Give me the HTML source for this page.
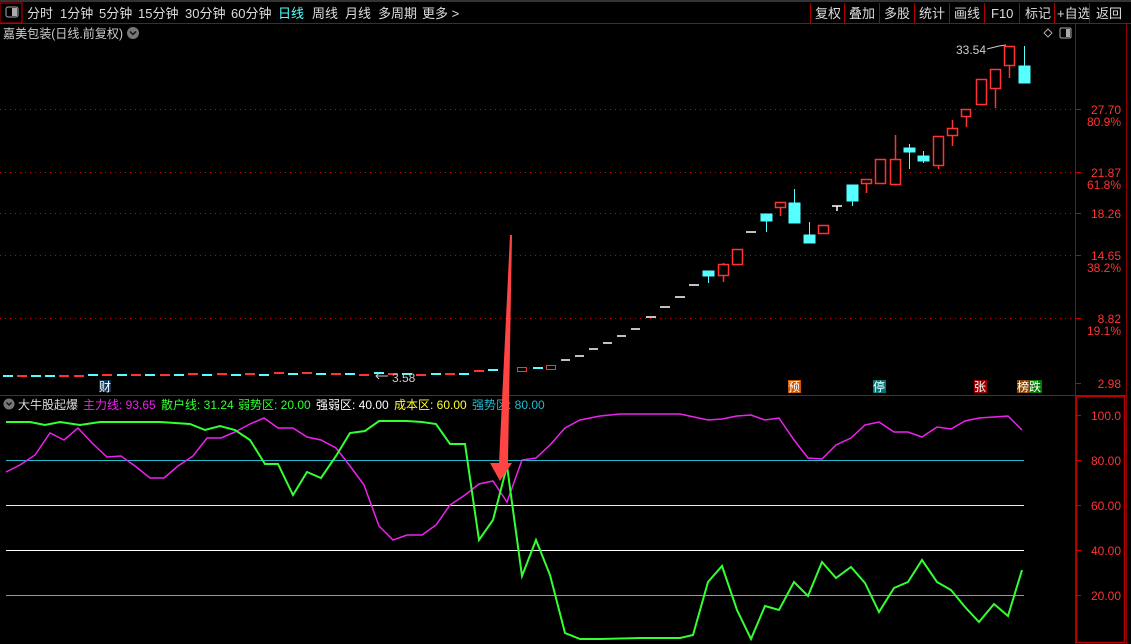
<!DOCTYPE html>
<html><head><meta charset="utf-8"><style>
html,body{margin:0;padding:0;background:#000;width:1131px;height:644px;overflow:hidden;font-family:"Liberation Sans","Noto Sans CJK SC",sans-serif}
</style></head><body>
<svg width="1131" height="644" style="position:absolute;left:0;top:0" font-family="Liberation Sans, Noto Sans CJK SC, sans-serif">
<rect x="0" y="0" width="1131" height="2" fill="#333"/>
<line x1="0" y1="23.5" x2="1131" y2="23.5" stroke="#a00" />
<rect x="0" y="3" width="22" height="20" fill="none" stroke="#c00"/>
<rect x="6" y="7" width="12" height="10" rx="2" fill="none" stroke="#aaa"/><rect x="12" y="8" width="5" height="8" fill="#aaa"/>
<g font-size="13" fill="#ddd">
<text x="27" y="18">分时</text><text x="60" y="18">1分钟</text><text x="99" y="18">5分钟</text><text x="138" y="18">15分钟</text><text x="185" y="18">30分钟</text><text x="231" y="18">60分钟</text>
<text x="278" y="18" fill="#5ff">日线</text><text x="312" y="18">周线</text><text x="345" y="18">月线</text><text x="378" y="18">多周期</text><text x="422" y="18">更多 &gt;</text>
<text x="815" y="18">复权</text><text x="849" y="18">叠加</text><text x="884" y="18">多股</text><text x="919" y="18">统计</text><text x="954" y="18">画线</text><text x="991" y="18">F10</text><text x="1025" y="18">标记</text><text x="1057" y="18">+自选</text><text x="1096" y="18">返回</text>
</g>
<g stroke="#a00"><line x1="810.5" y1="3" x2="810.5" y2="23"/><line x1="844.5" y1="3" x2="844.5" y2="23"/><line x1="879.5" y1="3" x2="879.5" y2="23"/><line x1="914.5" y1="3" x2="914.5" y2="23"/><line x1="949.5" y1="3" x2="949.5" y2="23"/><line x1="984.5" y1="3" x2="984.5" y2="23"/><line x1="1019.5" y1="3" x2="1019.5" y2="23"/><line x1="1054.5" y1="3" x2="1054.5" y2="23"/><line x1="1089.5" y1="3" x2="1089.5" y2="23"/></g>
<text x="3" y="38" font-size="12.5" fill="#ccc" textLength="120" lengthAdjust="spacingAndGlyphs">嘉美包装(日线.前复权)</text>
<circle cx="133" cy="33" r="6" fill="#777"/><path d="M130 31.5l3 3 3-3" stroke="#111" stroke-width="1.5" fill="none"/>
<path d="M1048 29l4 4-4 4-4-4z" fill="none" stroke="#aaa"/>
<rect x="1060" y="28" width="11" height="10" rx="1.5" fill="none" stroke="#aaa"/><rect x="1066" y="29" width="4" height="8" fill="#aaa"/>
<line x1="1075.5" y1="24" x2="1075.5" y2="644" stroke="#a00"/>
<line x1="1126.5" y1="24" x2="1126.5" y2="644" stroke="#800"/>
<line x1="0" y1="395.5" x2="1126" y2="395.5" stroke="#b00"/>
<rect x="1076.5" y="396.5" width="48" height="246" fill="none" stroke="#b00" stroke-width="1.5"/>
<g stroke="#c00" stroke-dasharray="1 4">
<line x1="0" y1="109.5" x2="1075" y2="109.5"/><line x1="0" y1="172.5" x2="1075" y2="172.5"/><line x1="0" y1="213.5" x2="1075" y2="213.5"/><line x1="0" y1="255.5" x2="1075" y2="255.5"/><line x1="0" y1="318.5" x2="1075" y2="318.5"/>
</g>
<g stroke="#c00"><line x1="1075" y1="109.5" x2="1081" y2="109.5"/><line x1="1075" y1="172.5" x2="1081" y2="172.5"/><line x1="1075" y1="213.5" x2="1081" y2="213.5"/><line x1="1075" y1="255.5" x2="1081" y2="255.5"/><line x1="1075" y1="318.5" x2="1081" y2="318.5"/><line x1="1075" y1="383.5" x2="1081" y2="383.5"/>
<line x1="1075" y1="415.5" x2="1081" y2="415.5"/><line x1="1075" y1="460.5" x2="1081" y2="460.5"/><line x1="1075" y1="505.5" x2="1081" y2="505.5"/><line x1="1075" y1="550.5" x2="1081" y2="550.5"/><line x1="1075" y1="595.5" x2="1081" y2="595.5"/></g>
<g font-size="12" fill="#f33" text-anchor="end">
<text x="1121" y="114">27.70</text><text x="1121" y="126">80.9%</text>
<text x="1121" y="177">21.87</text><text x="1121" y="189">61.8%</text>
<text x="1121" y="218">18.26</text>
<text x="1121" y="260">14.65</text><text x="1121" y="272">38.2%</text>
<text x="1121" y="323">8.82</text><text x="1121" y="335">19.1%</text>
<text x="1121" y="388">2.98</text>
<text x="1121" y="420">100.0</text><text x="1121" y="465">80.00</text><text x="1121" y="510">60.00</text><text x="1121" y="555">40.00</text><text x="1121" y="600">20.00</text>
</g>
<g stroke-width="2">
<path d="M3 376h10M31 376h10M45 376h10" stroke="#5ff"/>
<path d="M17 376h10M59 376h10M74 376h10" stroke="#f33"/>
<path d="M88 375h10M117 375h10M145 375h10M174 375h10M202 375h10M231 375h10M259 375h10M288 374h10M316 374h10M345 374h10M374 373h10M402 374h10M431 374h10M459 374h10" stroke="#5ff"/>
<path d="M102 375h10M131 375h10M160 375h10M188 374h10M217 374h10M245 374h10M274 373h10M302 373h10M331 374h10M359 375h10M388 374h10M416 375h10M445 374h10" stroke="#f33"/>
<path d="M474 371h10" stroke="#f33"/><path d="M488 370h10" stroke="#5ff"/><path d="M533 368h10" stroke="#5ff"/>
</g>
<rect x="517.5" y="367.5" width="9" height="4" fill="none" stroke="#f33"/>
<rect x="546.5" y="365.5" width="9" height="4" fill="none" stroke="#f33"/>
<g stroke="#fff" stroke-width="1.5">
<path d="M561 360h9M575 356h9M589 349h9M603 343h9M617 336h9M631 329h9M646 317h10M660 307h10M675 297h10M689 285h10M746 232h10M832 206h10M837 206v5"/>
</g>
<g fill="#5ff" stroke="#5ff">
<line x1="708.5" y1="271" x2="708.5" y2="283"/><rect x="703" y="271" width="11" height="5"/>
<line x1="766.5" y1="214" x2="766.5" y2="232"/><rect x="761" y="214" width="11" height="7"/>
<line x1="794.5" y1="189" x2="794.5" y2="223"/><rect x="789" y="203" width="11" height="20"/>
<line x1="809.5" y1="222" x2="809.5" y2="243"/><rect x="804" y="235" width="11" height="8"/>
<line x1="852.5" y1="185" x2="852.5" y2="206"/><rect x="847" y="185" width="11" height="16"/>
<line x1="909.5" y1="144" x2="909.5" y2="169"/><rect x="904" y="148" width="11" height="4"/>
<line x1="923.5" y1="151" x2="923.5" y2="163"/><rect x="918" y="156" width="11" height="5"/>
<line x1="1024.5" y1="46" x2="1024.5" y2="66"/><rect x="1019" y="66" width="11" height="17"/>
</g>
<g fill="#000" stroke="#f33" stroke-width="1.5">
<line x1="723.5" y1="263" x2="723.5" y2="282"/><rect x="718.5" y="264.5" width="10" height="11"/>
<rect x="732.5" y="249.5" width="10" height="15"/>
<line x1="780.5" y1="208" x2="780.5" y2="216"/><rect x="775.5" y="202.5" width="10" height="5"/>
<rect x="818.5" y="225.5" width="10" height="8"/>
<line x1="866.5" y1="184" x2="866.5" y2="193"/><rect x="861.5" y="179.5" width="10" height="4"/>
<rect x="875.5" y="159.5" width="10" height="24"/>
<line x1="895.5" y1="135" x2="895.5" y2="159"/><rect x="890.5" y="159.5" width="10" height="25"/>
<line x1="938.5" y1="166" x2="938.5" y2="169"/><rect x="933.5" y="136.5" width="10" height="29"/>
<line x1="952.5" y1="120" x2="952.5" y2="146"/><rect x="947.5" y="128.5" width="10" height="7"/>
<line x1="966.5" y1="117" x2="966.5" y2="127"/><rect x="961.5" y="109.5" width="9" height="7"/>
<rect x="976.5" y="79.5" width="10" height="25"/>
<line x1="995.5" y1="88" x2="995.5" y2="108"/><rect x="990.5" y="69.5" width="10" height="19"/>
<line x1="1009.5" y1="66" x2="1009.5" y2="78"/><rect x="1004.5" y="46.5" width="10" height="19"/>
</g>
<text x="956" y="54" font-size="12" fill="#ccc">33.54</text>
<path d="M987 49l12-3 7-1" stroke="#ccc" fill="none"/>
<text x="392" y="382" font-size="12" fill="#ccc">3.58</text>
<path d="M376 376h12M379 373l-3 3 3 3" stroke="#ccc" fill="none"/>
<g font-size="12">
<rect x="99" y="380" width="12" height="12" fill="#135"/><text x="99" y="391" fill="#fff">财</text>
<rect x="788" y="380" width="13" height="13" fill="#c50"/><text x="788" y="391" fill="#fff">预</text>
<rect x="873" y="380" width="13" height="13" fill="#077"/><text x="873" y="391" fill="#fff">停</text>
<rect x="974" y="380" width="13" height="13" fill="#900"/><text x="974" y="391" fill="#fff">张</text>
<rect x="1017" y="380" width="12" height="13" fill="#840"/><text x="1017" y="391" fill="#fff">榜</text>
<rect x="1029" y="380" width="13" height="13" fill="#070"/><text x="1029" y="391" fill="#fff">跌</text>
</g>
<circle cx="9" cy="404" r="5.5" fill="#777"/><path d="M6.5 402.5l2.5 2.5 2.5-2.5" stroke="#111" stroke-width="1.5" fill="none"/>
<g font-size="12">
<text x="18" y="409" fill="#ddd">大牛股起爆</text>
<text x="83" y="409" fill="#e2e">主力线: 93.65</text>
<text x="161" y="409" fill="#3f3">散户线: 31.24</text>
<text x="238" y="409" fill="#3f3">弱势区: 20.00</text>
<text x="316" y="409" fill="#fff">强弱区: 40.00</text>
<text x="394" y="409" fill="#ff3">成本区: 60.00</text>
<text x="472" y="409" fill="#2bc">强势区: 80.00</text>
</g>
<line x1="6" y1="460.5" x2="1024" y2="460.5" stroke="#2bc"/>
<line x1="6" y1="505.5" x2="1024" y2="505.5" stroke="#ff3"/>
<line x1="6" y1="550.5" x2="1024" y2="550.5" stroke="#fff"/>
<line x1="6" y1="595.5" x2="1024" y2="595.5" stroke="#3d3"/>
<polyline fill="none" stroke="#e2e" stroke-width="1.5" points="6,472 20,465 35,455 50,433 64,440 78,428 92,443 107,457 121,456 135,466 150,478 164,478 178,466 193,456 207,438 221,438 235,432 250,424 264,418 278,428 293,428 307,437 321,440 336,448 350,466 364,485 379,526 393,540 407,535 422,535 436,525 450,505 465,495 479,484 493,481 507,502 522,460 536,458 550,445 565,428 580,420 600,416 620,414 680,414 708,420 722,419 737,416 751,415 765,420 779,418 794,440 808,458 822,459 836,445 851,438 865,425 879,422 894,432 908,432 922,437 937,427 951,429 965,421 979,418 994,417 1008,416 1022,430"/>
<polyline fill="none" stroke="#3f3" stroke-width="2" points="6,422 30,422 45,425 60,422 80,425 100,422 130,422 160,422 190,424 205,430 220,426 235,430 250,440 265,464 278,464 293,495 307,472 321,478 336,456 350,433 365,431 379,421 393,421 407,421 422,422 436,424 450,444 465,444 479,540 493,520 507,466 522,576 536,540 550,575 565,633 580,639 600,639 640,638 680,638 693,635 708,582 722,566 737,610 751,639 765,606 779,610 794,582 808,596 822,562 836,578 851,567 865,583 879,612 894,588 908,582 922,560 937,582 951,590 965,607 979,622 994,604 1008,616 1022,570"/>
<polygon fill="#f44" points="510,235 512,235 508,463 512,463 500,481 490,463 499,463"/>
</svg>
</body></html>
